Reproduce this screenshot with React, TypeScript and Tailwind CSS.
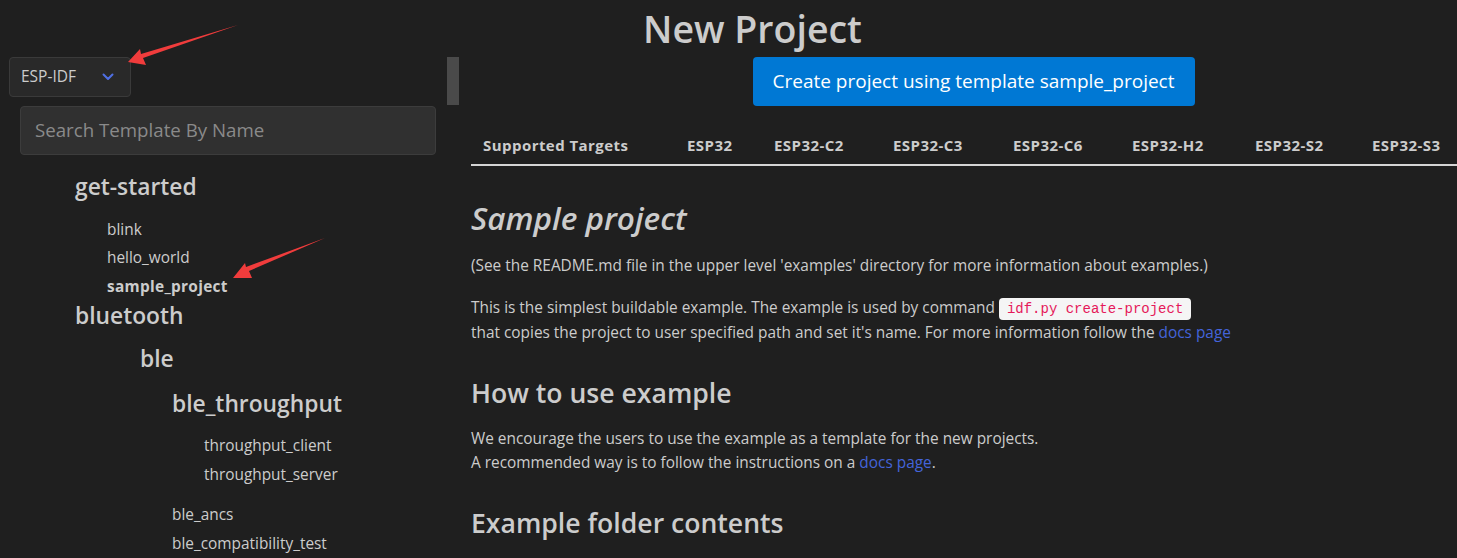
import React from "react";

const font = { fontFamily: '"Open Sans", "Noto Sans", sans-serif' };

function ChevronDown() {
  return (
    <svg width="12" height="8" viewBox="0 0 12 8" fill="none">
      <path d="M1.5 1.5 L6 6 L10.5 1.5" stroke="#4f6fe3" strokeWidth="2" strokeLinecap="round" strokeLinejoin="round" />
    </svg>
  );
}

function Arrows() {
  return (
    <svg className="pointer-events-none absolute left-0 top-0" width="1457" height="558" viewBox="0 0 1457 558">
      <polygon points="238,25 143,58 146,65 128,62 140,49 141,54" fill="#f03c3c" />
      <polygon points="325,238 249,271 252,278 233,278 245,263 246,267" fill="#f03c3c" />
    </svg>
  );
}

const targets = ["ESP32", "ESP32-C2", "ESP32-C3", "ESP32-C6", "ESP32-H2", "ESP32-S2", "ESP32-S3"];

export default function App() {
  return (
    <div className="relative h-[558px] w-[1457px] overflow-hidden bg-[#1f1f1f] text-[#cccccc]" style={font}>
      <div className="flex h-[57px] items-center justify-center pl-[48px]">
        <h1 className="text-[37.5px] font-semibold leading-none text-[#cccccc]">New Project</h1>
      </div>
      <div className="flex">
        <div className="relative w-[460px] shrink-0 pl-[9px]">
          <div className="absolute left-[447px] top-0 h-[48px] w-[12px] bg-[#4a4a4a]" />
          <div className="flex h-[40px] w-[122px] items-center justify-between rounded-[4px] border border-[#3a3a3a] bg-[#292929] pl-[11px] pr-[16px] text-[15.5px]">
            <span>ESP-IDF</span>
            <ChevronDown />
          </div>
          <div className="ml-[11px] mt-[9px] flex h-[49px] w-[416px] items-center rounded-[4px] border border-[#3c3c3c] bg-[#303030] pl-[14px] text-[18.7px] text-[#8a8a8a]">
            Search Template By Name
          </div>
          <div className="mt-[14px]">
            <div className="flex h-[36px] items-center pl-[66px] text-[22.8px] font-semibold">get-started</div>
            <div className="mt-[11px] flex h-[28px] items-center pl-[98px] text-[15.4px]">blink</div>
            <div className="flex h-[28px] items-center pl-[98px] text-[15.4px]">hello_world</div>
            <div className="flex h-[29px] items-center pl-[98px] text-[15.4px] font-bold tracking-[0.3px]">sample_project</div>
            <div className="flex h-[31px] items-center pl-[66px] text-[22.8px] font-semibold">bluetooth</div>
            <div className="mt-[9px] flex h-[36px] items-center pl-[131px] text-[22.8px] font-semibold">ble</div>
            <div className="mt-[9px] flex h-[36px] items-center pl-[163px] text-[22.8px] font-semibold">ble_throughput</div>
            <div className="mt-[9px] flex h-[29px] items-center pl-[195px] text-[15.4px]">throughput_client</div>
            <div className="flex h-[29px] items-center pl-[195px] text-[15.4px]">throughput_server</div>
            <div className="mt-[11px] flex h-[29px] items-center pl-[163px] text-[15.4px]">ble_ancs</div>
            <div className="flex h-[29px] items-center pl-[163px] text-[15.4px]">ble_compatibility_test</div>
          </div>
        </div>
        <div className="min-w-0 flex-1 overflow-hidden pl-[11px]">
          <div className="flex justify-center pl-[19px]">
            <button className="flex h-[49px] w-[442px] items-center justify-center rounded-[4px] bg-[#0078d4] text-[19px] text-white">
              Create project using template sample_project
            </button>
          </div>
          <div className="mt-[21px] grid h-[39px] w-[1100px] grid-cols-[204px_87px_119px_120px_119px_123px_117px_1fr] items-center border-b-2 border-[#d4d4d4] text-[15px] font-bold tracking-[0.45px]">
            <div className="pl-[12px]">Supported Targets</div>
            {targets.map((t) => (
              <div key={t} className="pl-[12px]">{t}</div>
            ))}
          </div>
          <h2 className="mt-[32px] flex h-[40px] items-center text-[31.5px] font-semibold italic">Sample project</h2>
          <p className="mt-[16px] text-[15.4px] leading-[24px]">
            (See the README.md file in the upper level 'examples' directory for more information about examples.)
          </p>
          <p className="mt-[17px] text-[15.4px] leading-[25px]">
            This is the simplest buildable example. The example is used by command{" "}
            <code className="inline-block rounded-[4px] bg-[#f5f5f5] px-[8px] py-[4px] align-middle text-[14px] leading-[14px] text-[#e5195a]" style={{ fontFamily: '"Liberation Mono", monospace' }}>
              idf.py create-project
            </code>
            <br />
            that copies the project to user specified path and set it's name. For more information follow the{" "}
            <span className="text-[#4464d9]">docs page</span>
          </p>
          <h2 className="mt-[31px] flex h-[36px] items-center text-[26.6px] font-semibold">How to use example</h2>
          <p className="mt-[15px] text-[15.4px] leading-[24px]">
            We encourage the users to use the example as a template for the new projects.
            <br />
            A recommended way is to follow the instructions on a <span className="text-[#4464d9]">docs page</span>.
          </p>
          <h2 className="mt-[31px] flex h-[36px] items-center text-[26.6px] font-semibold">Example folder contents</h2>
        </div>
      </div>
      <Arrows />
    </div>
  );
}
